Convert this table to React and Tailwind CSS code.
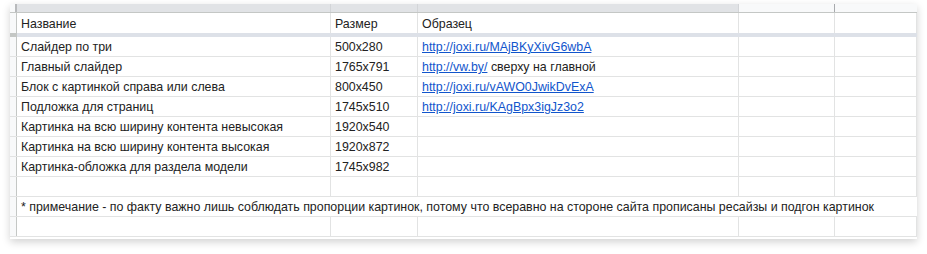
const cols = ['w-[314px]', 'w-[87px]', 'w-[321px]', 'w-[96px]', 'w-[82px]'];

const rows = [
  ['Слайдер по три', '500x280', { link: 'http://joxi.ru/MAjBKyXivG6wbA' }],
  ['Главный слайдер', '1765x791', { link: 'http://vw.by/', tail: ' сверху на главной' }],
  ['Блок с картинкой справа или слева', '800x450', { link: 'http://joxi.ru/vAWO0JwikDvExA' }],
  ['Подложка для страниц', '1745x510', { link: 'http://joxi.ru/KAgBpx3igJz3o2' }],
  ['Картинка на всю ширину контента невысокая', '1920x540', null],
  ['Картинка на всю ширину контента высокая', '1920x872', null],
  ['Картинка-обложка для раздела модели', '1745x982', null],
  ['', '', null],
];

const Cell = ({ w, children }) => (
  <div className={`${w} h-full shrink-0 border-r border-[#e2e3e3] px-[4px] pt-[2px] flex items-center whitespace-nowrap overflow-visible`}>
    {children}
  </div>
);

const RowNum = () => <div className="w-[7px] h-full shrink-0 bg-[#f8f9fa] border-r border-[#c4c7c5]" />;

const Row = ({ a, b, c }) => (
  <div className="flex h-[20px] border-b border-[#e2e3e3]">
    <RowNum />
    <Cell w={cols[0]}>{a}</Cell>
    <Cell w={cols[1]}>{b}</Cell>
    <Cell w={cols[2]}>
      {c && (
        <span>
          <span className="text-[#1155cc] underline">{c.link}</span>
          {c.tail}
        </span>
      )}
    </Cell>
    <Cell w={cols[3]} />
    <Cell w={cols[4]} />
  </div>
);

export default function App() {
  return (
    <div className="w-[927px] h-[254px] bg-white pt-[4px] pl-[10px] overflow-hidden">
      <div
        className="w-[907px] bg-white shadow-[0_3px_8px_rgba(0,0,0,0.18)] text-[12.4px] leading-none text-[#222]"
        style={{ fontFamily: '"Liberation Sans", Arial, sans-serif' }}
      >
        {/* column header strip */}
        <div className="flex h-[9px] border-b border-[#c4c7c5]">
          <div className="w-[7px] h-full shrink-0 bg-[#f8f9fa] flex justify-end">
            <div className="w-[2px] h-full bg-[#b8babc]" />
          </div>
          <div className={`${cols[0]} h-full bg-[#e1e3e6] border-r border-[#d3d5d8]`} />
          <div className={`${cols[1]} h-full bg-[#e1e3e6] border-r border-[#d3d5d8]`} />
          <div className={`${cols[2]} h-full bg-[#e1e3e6] border-r border-[#d3d5d8]`} />
          <div className={`${cols[3]} h-full bg-[#f8f9fa] border-r border-[#a8aaad]`} />
          <div className={`${cols[4]} h-full bg-[#f8f9fa]`} />
        </div>

        <div className="flex h-[20px]">
          <RowNum />
          <Cell w={cols[0]}>Название</Cell>
          <Cell w={cols[1]}>Размер</Cell>
          <Cell w={cols[2]}>Образец</Cell>
          <Cell w={cols[3]} />
          <Cell w={cols[4]} />
        </div>

        {/* frozen row divider */}
        <div className="flex h-[4px]">
          <div className="w-[7px] shrink-0 bg-[#c4c7c5]" />
          <div className="flex-1 bg-[#dde1e8]" />
        </div>

        {rows.map(([a, b, c], i) => (
          <Row key={i} a={a} b={b} c={c} />
        ))}

        <div className="flex h-[20px] border-b border-[#e2e3e3]">
          <RowNum />
          <div className="flex-1 px-[4px] pt-[2px] flex items-center whitespace-nowrap">
            * примечание - по факту важно лишь соблюдать пропорции картинок, потому что всеравно на стороне сайта прописаны ресайзы и подгон картинок
          </div>
        </div>

        <Row a="" b="" c={null} />
        <div className="h-[2px]" />
      </div>
    </div>
  );
}
